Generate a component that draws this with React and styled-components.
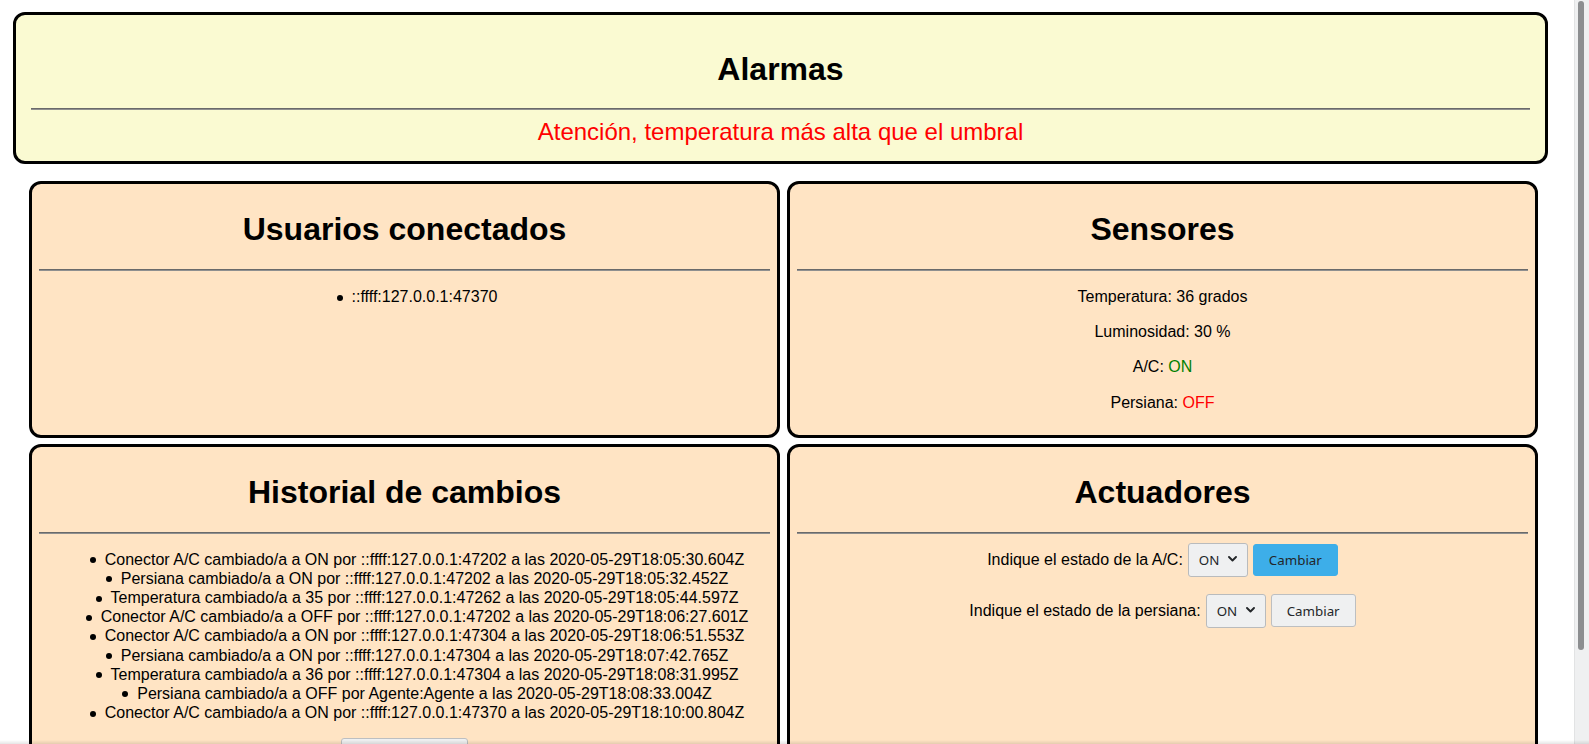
import React from "react";
import styled, { createGlobalStyle } from "styled-components";

const GlobalStyle = createGlobalStyle`
  html, body {
    margin: 0;
    padding: 0;
    background: #ffffff;
  }
  body {
    font-family: "Liberation Sans", Arial, sans-serif;
    font-size: 16px;
    color: #000;
  }
`;

const Page = styled.div`
  margin-right: 15px;
  padding: 12px 0 55px 0;
`;

const ScrollTrack = styled.div`
  position: fixed;
  top: 0;
  right: 0;
  bottom: 0;
  width: 15px;
  background: #eff0f1;
  border-left: 1px solid #e2e3e4;
  box-sizing: border-box;
  z-index: 10;
`;

const ScrollThumb = styled.div`
  position: absolute;
  top: 1px;
  left: 3px;
  width: 6px;
  height: 649px;
  border-radius: 3px;
  background: #8c8e90;
`;

const BottomShade = styled.div`
  position: fixed;
  left: 0;
  right: 0;
  bottom: 0;
  height: 4px;
  background: linear-gradient(to bottom, rgba(0, 0, 0, 0), rgba(0, 0, 0, 0.1));
  pointer-events: none;
  z-index: 11;
`;

const AlarmBox = styled.section`
  margin: 0 26px 0 13px;
  padding: 14px 15px 15px;
  background: #fafad2;
  border: 3px solid #000;
  border-radius: 12px;
  text-align: center;
`;

const Title = styled.h1`
  margin: 21px 0 21px;
  font-size: 32px;
  line-height: 37px;
  font-weight: bold;
`;

const AlarmTitle = styled(Title)`
  margin: 22px 0 20px;
`;

const Rule = styled.hr`
  margin: 0 0 8px;
  border: 0;
  border-top: 1px solid #6a6a6a;
  border-bottom: 1px solid #8f8f8f;
  height: 0;
`;

const AlarmText = styled.p`
  margin: 0;
  font-size: 24px;
  line-height: 28px;
  color: #ff0000;
`;

const Grid = styled.div`
  margin: 17px 36px 0 29px;
  display: grid;
  grid-template-columns: 1fr 1fr;
  column-gap: 7px;
  row-gap: 6px;
`;

const Card = styled.section`
  min-width: 0;
  padding: 6px 7px 7px;
  background: #ffe4c4;
  border: 3px solid #000;
  border-radius: 12px;
  text-align: center;
`;

const CardRule = styled(Rule)`
  margin-bottom: 16px;
`;

const List = styled.ul`
  margin: 0 0 16px;
  padding-left: 40px;
  line-height: 19.15px;
  text-align: center;
  list-style: none;
`;

const Item = styled.li`
  display: block;
`;

const ItemText = styled.span`
  position: relative;
  &::before {
    content: "";
    position: absolute;
    right: 100%;
    top: 50%;
    width: 6px;
    height: 6px;
    margin: -2px 9px 0 0;
    border-radius: 50%;
    background: #000;
  }
`;

const Line = styled.p`
  margin: 0 0 16px;
  line-height: 19.2px;
`;

const State = styled.span`
  color: ${(p) => (p.$on ? "#008000" : "#ff0000")};
`;

const Controls = styled.div`
  display: flex;
  flex-direction: column;
  gap: 15px;
`;

const ControlRow = styled.form`
  margin: 0;
  height: 36px;
  display: flex;
  align-items: center;
  justify-content: center;
  gap: 5px;
`;

const Label = styled.label`
  font-size: 16px;
  line-height: 19px;
`;

const SelectWrap = styled.span`
  position: relative;
  display: inline-flex;
`;

const Select = styled.select`
  appearance: none;
  -webkit-appearance: none;
  box-sizing: border-box;
  width: 60px;
  height: 34px;
  padding: 0 0 0 10px;
  margin: 0;
  font-family: "Noto Sans", "Open Sans", sans-serif;
  font-size: 13.33px;
  color: #232629;
  background: #eff0f1;
  border: 1px solid #b9bbbd;
  border-radius: 3px;
  outline: none;
`;

const Chevron = styled.svg`
  position: absolute;
  right: 11px;
  top: 50%;
  width: 9px;
  height: 6px;
  margin-top: -4px;
  pointer-events: none;
`;

const Button = styled.button`
  box-sizing: border-box;
  height: ${(p) => (p.$primary ? "32px" : "33px")};
  padding: 0 15px;
  margin: 0;
  font-family: "Noto Sans", "Open Sans", sans-serif;
  font-size: 13.33px;
  color: #232629;
  background: ${(p) => (p.$primary ? "#3daee9" : "#eff0f1")};
  border: 1px solid ${(p) => (p.$primary ? "#3daee9" : "#bdbfc1")};
  border-radius: 3px;
`;

const BottomButton = styled(Button)`
  display: block;
  margin: 0 auto 16px;
`;

const history = [
  "Conector A/C cambiado/a a ON por ::ffff:127.0.0.1:47202 a las 2020-05-29T18:05:30.604Z",
  "Persiana cambiado/a a ON por ::ffff:127.0.0.1:47202 a las 2020-05-29T18:05:32.452Z",
  "Temperatura cambiado/a a 35 por ::ffff:127.0.0.1:47262 a las 2020-05-29T18:05:44.597Z",
  "Conector A/C cambiado/a a OFF por ::ffff:127.0.0.1:47202 a las 2020-05-29T18:06:27.601Z",
  "Conector A/C cambiado/a a ON por ::ffff:127.0.0.1:47304 a las 2020-05-29T18:06:51.553Z",
  "Persiana cambiado/a a ON por ::ffff:127.0.0.1:47304 a las 2020-05-29T18:07:42.765Z",
  "Temperatura cambiado/a a 36 por ::ffff:127.0.0.1:47304 a las 2020-05-29T18:08:31.995Z",
  "Persiana cambiado/a a OFF por Agente:Agente a las 2020-05-29T18:08:33.004Z",
  "Conector A/C cambiado/a a ON por ::ffff:127.0.0.1:47370 a las 2020-05-29T18:10:00.804Z",
];

function StateSelect() {
  return (
    <SelectWrap>
      <Select defaultValue="ON">
        <option value="ON">ON</option>
        <option value="OFF">OFF</option>
      </Select>
      <Chevron viewBox="0 0 9 6">
        <path d="M1 1 L4.5 4.5 L8 1" fill="none" stroke="#232629" strokeWidth="1.9" strokeLinecap="round" strokeLinejoin="round" />
      </Chevron>
    </SelectWrap>
  );
}

export default function App() {
  return (
    <>
      <GlobalStyle />
      <Page>
        <AlarmBox>
          <AlarmTitle>Alarmas</AlarmTitle>
          <Rule />
          <AlarmText>Atención, temperatura más alta que el umbral</AlarmText>
        </AlarmBox>
        <Grid>
          <Card>
            <Title>Usuarios conectados</Title>
            <CardRule />
            <List>
              <Item>
                <ItemText>::ffff:127.0.0.1:47370</ItemText>
              </Item>
            </List>
          </Card>
          <Card>
            <Title>Sensores</Title>
            <CardRule />
            <Line>Temperatura: 36 grados</Line>
            <Line>Luminosidad: 30 %</Line>
            <Line>
              A/C: <State $on>ON</State>
            </Line>
            <Line>
              Persiana: <State>OFF</State>
            </Line>
          </Card>
          <Card>
            <Title>Historial de cambios</Title>
            <CardRule />
            <List>
              {history.map((h, i) => (
                <Item key={i}>
                  <ItemText>{h}</ItemText>
                </Item>
              ))}
            </List>
            <BottomButton type="button">Borrar historial</BottomButton>
          </Card>
          <Card>
            <Title>Actuadores</Title>
            <Rule />
            <Controls>
              <ControlRow onSubmit={(e) => e.preventDefault()}>
                <Label>Indique el estado de la A/C:</Label>
                <StateSelect />
                <Button type="submit" $primary>Cambiar</Button>
              </ControlRow>
              <ControlRow onSubmit={(e) => e.preventDefault()}>
                <Label>Indique el estado de la persiana:</Label>
                <StateSelect />
                <Button type="submit">Cambiar</Button>
              </ControlRow>
            </Controls>
          </Card>
        </Grid>
      </Page>
      <ScrollTrack>
        <ScrollThumb />
      </ScrollTrack>
      <BottomShade />
    </>
  );
}
